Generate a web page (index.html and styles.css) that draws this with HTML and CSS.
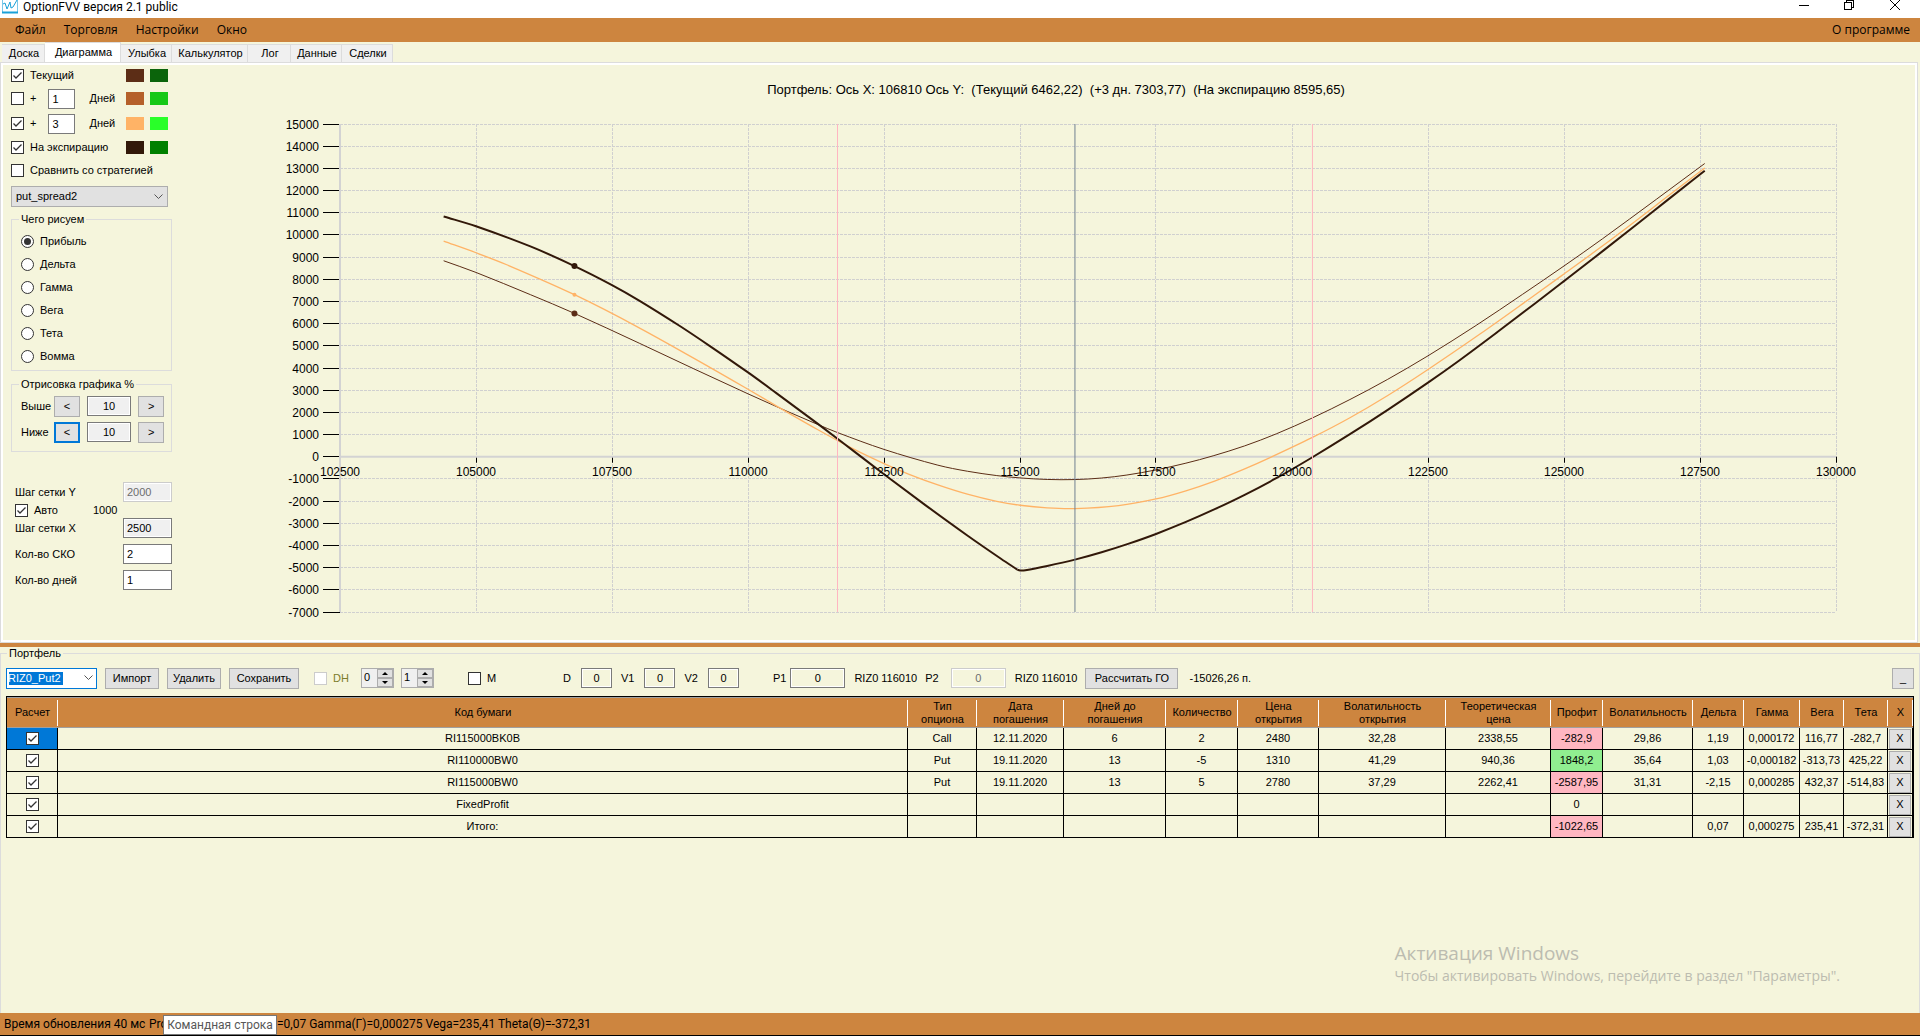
FILE: index.html
```html
<!DOCTYPE html>
<html lang="ru">
<head>
  <meta charset="UTF-8">
  <meta name="viewport" content="width=device-width, initial-scale=1.0">
  <title>OptionFVV версия 2.1 public</title>
  <link rel="stylesheet" href="styles.css">
</head>
<body>
  <header class="titlebar">
    <svg class="app-icon" width="16" height="16" viewBox="0 0 16 16" fill="none" stroke="#1ba1d8">
      <path d="M0.5 0V14.5H15.5V0" stroke="#7cc8e8"/>
      <path d="M0 14.5H16" stroke-width="2"/>
      <path d="M1 6L3 5L5 11L8 4L9 10L11 9L15 2"/>
    </svg>
    <span class="app-name">OptionFVV версия 2.1 public</span>
    <svg class="win-buttons" width="112" height="18" viewBox="0 0 112 18" fill="none" stroke="#000" shape-rendering="crispEdges">
      <path d="M5 5.5H15"/>
      <path d="M50.5 2.5H57.5V9.5H50.5ZM52.5 2V0.5H59.5V7.5H58"/>
      <path d="M96 0L106 10M106 0L96 10" shape-rendering="auto"/>
    </svg>
  </header>

  <nav class="menu">
    <a href="#">Файл</a>
    <a href="#">Торговля</a>
    <a href="#">Настройки</a>
    <a href="#">Окно</a>
    <a href="#" class="about">О программе</a>
  </nav>

  <nav class="tabs">
    <button class="tab tab-s">Доска</button>
    <button class="tab tab-l active">Диаграмма</button>
    <button class="tab tab-m">Улыбка</button>
    <button class="tab tab-l">Калькулятор</button>
    <button class="tab tab-s">Лог</button>
    <button class="tab tab-m">Данные</button>
    <button class="tab tab-m">Сделки</button>
  </nav>

  <main class="panel">
    <aside class="side">
      <div class="lines">
        <div class="line">
          <label><input type="checkbox" checked>Текущий</label>
          <span class="swatches"><i class="sw brown1"></i><i class="sw green1"></i></span>
        </div>
        <div class="line tall">
          <label><input type="checkbox">+</label>
          <input type="text" class="days" id="d1" value="1"><label for="d1">Дней</label>
          <span class="swatches"><i class="sw brown2"></i><i class="sw green2"></i></span>
        </div>
        <div class="line tall">
          <label><input type="checkbox" checked>+</label>
          <input type="text" class="days" id="d2" value="3"><label for="d2">Дней</label>
          <span class="swatches"><i class="sw brown3"></i><i class="sw green3"></i></span>
        </div>
        <div class="line">
          <label><input type="checkbox" checked>На экспирацию</label>
          <span class="swatches"><i class="sw brown4"></i><i class="sw green4"></i></span>
        </div>
        <div class="line tall">
          <label><input type="checkbox">Сравнить со стратегией</label>
        </div>
      </div>

      <select class="strategy"><option>put_spread2</option></select>

      <fieldset class="what">
        <legend>Чего рисуем</legend>
        <label><input type="radio" name="what" checked>Прибыль</label>
        <label><input type="radio" name="what">Дельта</label>
        <label><input type="radio" name="what">Гамма</label>
        <label><input type="radio" name="what">Вега</label>
        <label><input type="radio" name="what">Тета</label>
        <label><input type="radio" name="what">Вомма</label>
      </fieldset>

      <fieldset class="range">
        <legend>Отрисовка графика %</legend>
        <div class="range-row">
          <label for="up">Выше</label>
          <button>&lt;</button><input type="text" id="up" value="10" readonly><button>&gt;</button>
        </div>
        <div class="range-row">
          <label for="down">Ниже</label>
          <button class="focused">&lt;</button><input type="text" id="down" value="10" readonly><button>&gt;</button>
        </div>
      </fieldset>

      <div class="steps">
        <div class="step"><label for="stepY">Шаг сетки Y</label><input type="text" id="stepY" value="2000" disabled></div>
        <div class="auto"><label><input type="checkbox" checked>Авто</label><span>1000</span></div>
        <div class="step"><label for="stepX">Шаг сетки X</label><input type="text" id="stepX" value="2500" readonly></div>
        <div class="step"><label for="sko">Кол-во СКО</label><input type="text" id="sko" value="2"></div>
        <div class="step"><label for="dni">Кол-во дней</label><input type="text" id="dni" value="1"></div>
      </div>
    </aside>
    <div class="chart" id="chart"></div>
  </main>

  <div class="splitter"></div>

  <fieldset class="portfolio">
    <legend>Портфель</legend>
    <div class="toolbar">
      <select class="portfolio-name"><option>RIZ0_Put2</option></select>
      <button>Импорт</button>
      <button>Удалить</button>
      <button class="wide">Сохранить</button>
      <label class="dh"><input type="checkbox" disabled>DH</label>
      <span class="spin"><input type="text" value="0"><span class="arrows"><button class="up"></button><button class="down"></button></span></span>
      <span class="spin"><input type="text" value="1"><span class="arrows"><button class="up"></button><button class="down"></button></span></span>
      <label class="m"><input type="checkbox">M</label>
      <label class="field">D<input type="text" value="0"></label>
      <label class="field">V1<input type="text" value="0"></label>
      <label class="field">V2<input type="text" value="0"></label>
      <label class="field price">P1<input type="text" value="0"></label>
      <span class="code">RIZ0 116010</span>
      <label class="field price second">P2<input type="text" value="0" disabled></label>
      <span class="code">RIZ0 116010</span>
      <button class="calc">Рассчитать ГО</button>
      <span class="margin">-15026,26 п.</span>
      <button class="collapse">_</button>
    </div>

    <div class="grid">
      <table>
        <colgroup>
          <col class="c-check"><col><col class="c-type"><col class="c-date"><col class="c-days"><col class="c-qty"><col class="c-open"><col class="c-vopen"><col class="c-theor"><col class="c-profit"><col class="c-vol"><col class="c-delta"><col class="c-gamma"><col class="c-vega"><col class="c-vega"><col class="c-x">
        </colgroup>
        <thead>
          <tr>
            <th>Расчет</th><th>Код бумаги</th><th>Тип<br>опциона</th><th>Дата<br>погашения</th><th>Дней до<br>погашения</th><th>Количество</th><th>Цена<br>открытия</th><th>Волатильность<br>открытия</th><th>Теоретическая<br>цена</th><th>Профит</th><th>Волатильность</th><th>Дельта</th><th>Гамма</th><th>Вега</th><th>Тета</th><th>X</th>
          </tr>
        </thead>
        <tbody>
          <tr>
            <td class="current"><input type="checkbox" checked></td><td>RI115000BK0B</td><td>Call</td><td>12.11.2020</td><td>6</td><td>2</td><td>2480</td><td>32,28</td><td>2338,55</td><td class="loss">-282,9</td><td>29,86</td><td>1,19</td><td>0,000172</td><td>116,77</td><td>-282,7</td><td><button>X</button></td>
          </tr>
          <tr>
            <td><input type="checkbox" checked></td><td>RI110000BW0</td><td>Put</td><td>19.11.2020</td><td>13</td><td>-5</td><td>1310</td><td>41,29</td><td>940,36</td><td class="gain">1848,2</td><td>35,64</td><td>1,03</td><td>-0,000182</td><td>-313,73</td><td>425,22</td><td><button>X</button></td>
          </tr>
          <tr>
            <td><input type="checkbox" checked></td><td>RI115000BW0</td><td>Put</td><td>19.11.2020</td><td>13</td><td>5</td><td>2780</td><td>37,29</td><td>2262,41</td><td class="loss">-2587,95</td><td>31,31</td><td>-2,15</td><td>0,000285</td><td>432,37</td><td>-514,83</td><td><button>X</button></td>
          </tr>
          <tr>
            <td><input type="checkbox" checked></td><td>FixedProfit</td><td></td><td></td><td></td><td></td><td></td><td></td><td></td><td>0</td><td></td><td></td><td></td><td></td><td></td><td><button>X</button></td>
          </tr>
          <tr>
            <td><input type="checkbox" checked></td><td>Итого:</td><td></td><td></td><td></td><td></td><td></td><td></td><td></td><td class="loss">-1022,65</td><td></td><td>0,07</td><td>0,000275</td><td>235,41</td><td>-372,31</td><td><button>X</button></td>
          </tr>
        </tbody>
      </table>
    </div>
  </fieldset>

  <footer class="status">
    <span class="update">Время обновления 40 мс</span>
    <span class="cut">Pro</span>
    <div class="tooltip">Командная строка</div>
    <span>=0,07 Gamma(Г)=0,000275 Vega=235,41 Theta(Θ)=-372,31</span>
  </footer>

  <div class="watermark">
    <p class="big">Активация Windows</p>
    <p>Чтобы активировать Windows, перейдите в раздел "Параметры".</p>
  </div>

  <script src="chart.js"></script>
</body>
</html>
```
FILE: styles.css
```css
:root {
  --bg: #f5f5dc;
  --bar: #cd853f;
  --line: #dcdcdc;
  --control: #e1e1e1;
  --blue: #0078d7;
}
* { box-sizing: border-box; }
body {
  margin: 0;
  min-height: 100vh;
  display: flex;
  flex-direction: column;
  position: relative;
  background: var(--bg);
  color: #000;
  font: 11px/13px "Liberation Sans", Arial, sans-serif;
}
input, select, button { font: inherit; color: inherit; margin: 0; }
input[type="text"] {
  height: 20px;
  padding: 0 3px;
  border: 1px solid #7a7a7a;
  background: #fff;
  min-width: 0;
}
input[readonly], input[type="text"]:disabled { background: #f0f0f0; box-shadow: inset 0 0 0 1px #fff; }
input:disabled { border-color: #ccc !important; color: #6d6d6d; }
button {
  border: 1px solid #adadad;
  background: var(--control);
  padding: 0;
}
input[type="checkbox"], input[type="radio"] {
  appearance: none;
  flex: none;
  width: 13px;
  height: 13px;
  border: 1px solid #333;
  background: #fff;
  display: inline-grid;
  place-content: center;
}
input[type="checkbox"]:checked {
  background: #fff url('data:image/svg+xml,<svg xmlns="http://www.w3.org/2000/svg" width="11" height="11" fill="none" stroke="%23333" stroke-width="1.3"><path d="M1.5 5.5L4 8L9.5 2.5"/></svg>') no-repeat center;
}
input[type="radio"] { border-radius: 50%; }
input[type="radio"]:checked::before {
  content: "";
  width: 7px;
  height: 7px;
  border-radius: 50%;
  background: #333;
}
select {
  appearance: none;
  border: 1px solid #adadad;
  border-radius: 0;
  padding: 0 4px;
  background: var(--control) url('data:image/svg+xml,<svg xmlns="http://www.w3.org/2000/svg" width="9" height="6" fill="none" stroke="%23555"><path d="M0.5 0.5L4.5 4.5L8.5 0.5"/></svg>') no-repeat right 4px center;
}
fieldset {
  margin: 0;
  border: 1px solid var(--line);
  min-width: 0;
}
legend { padding: 0 2px; }

/* window top */
.titlebar {
  display: flex;
  height: 18px;
  padding-left: 2px;
  background: #fff;
  font: 12px/14px Roboto, sans-serif;
}
.app-icon { margin-top: -2px; }
.app-name { margin-left: 5px; }
.win-buttons { margin-left: auto; margin-right: 14px; }
.menu {
  display: flex;
  gap: 18px;
  height: 24px;
  padding: 0 10px 0 15px;
  background: var(--bar);
  font: 12px/24px "Open Sans", sans-serif;
}
.menu a { color: #000; text-decoration: none; }
.menu .about { margin-left: auto; }
.tabs {
  display: flex;
  align-items: flex-end;
  height: 20px;
  padding-left: 2px;
}
.tab {
  height: 18px;
  padding-left: 2px;
  border: 1px solid var(--line);
  border-width: 1px 1px 0 0;
  background: #f0f0f0;
}
.tab-s { width: 43px; }
.tab-m { width: 51px; }
.tab-l { width: 76px; }
.tab.active { height: 20px; background: #fff; }

/* diagram page */
.panel {
  display: flex;
  margin-right: 2px;
  border: 1px solid var(--line);
  box-shadow: inset 0 0 0 2px #fff;
  padding: 1px 3px 3px;
}
.side {
  flex: none;
  width: 168px;
  padding: 0 0 46px 7px;
}
.side label { display: flex; align-items: center; gap: 6px; }
.line {
  display: flex;
  align-items: center;
  height: 22px;
}
.line.tall { height: 25px; }
.days { width: 27px; margin: 0 14px 0 12px; }
.swatches {
  display: flex;
  gap: 6px;
  margin-left: auto;
  padding-right: 4px;
}
.sw { width: 18px; height: 13px; }
.brown1 { background: #5c2d16; }
.brown2 { background: #b5602a; }
.brown3 { background: #ffb366; }
.brown4 { background: #321809; }
.green1 { background: #0b640b; }
.green2 { background: #17c817; }
.green3 { background: #29ff29; }
.green4 { background: #008000; }
.strategy { display: block; width: 157px; height: 21px; margin-top: 3px; }
.what { margin-top: 6px; padding: 4px 9px; height: 158px; }
.what legend, .range legend { margin-left: -2px; }
.what label { height: 23px; }
.range { margin-top: 7px; padding: 2px 7px 6px 9px; }
.range-row { display: flex; align-items: center; gap: 7px; height: 26px; }
.range-row label { width: 26px; }
.range-row button { width: 26px; height: 21px; }
.range-row input { width: 45px; text-align: center; }
.range-row .focused { border: 2px solid var(--blue); }
.steps { padding: 27px 0 0 4px; }
.step { display: flex; align-items: center; justify-content: space-between; height: 26px; }
.step input { width: 49px; }
.auto { display: flex; gap: 35px; height: 10px; align-items: center; }
.chart { flex: 1; min-width: 0; }
.chart svg { display: block; }
.chart text { font: 12px "Liberation Sans", Arial, sans-serif; white-space: pre; }
.chart .caption { font-size: 13px; }

.splitter { height: 4px; background: var(--bar); }

/* portfolio */
.portfolio {
  flex: 1;
  display: flex;
  flex-direction: column;
  border-width: 1px 1px 0;
  padding: 1px 5px 0;
}
.portfolio legend { margin-left: 1px; }
.toolbar { display: flex; align-items: center; height: 34px; }
.toolbar button { height: 21px; width: 54px; margin-left: 8px; }
.toolbar .wide { width: 70px; }
.portfolio-name {
  width: 91px;
  height: 21px;
  padding: 0 1px;
  border-color: var(--blue);
  color: #fff;
  background:
    url('data:image/svg+xml,<svg xmlns="http://www.w3.org/2000/svg" width="9" height="6" fill="none" stroke="%23555"><path d="M0.5 0.5L4.5 4.5L8.5 0.5"/></svg>') no-repeat right 3px center,
    linear-gradient(var(--blue), var(--blue)) no-repeat 2px center / 54px 13px,
    #fff;
}
.toolbar label { display: flex; align-items: center; gap: 6px; }
.dh { margin-left: 15px; color: #7c7c2a; }
.spin {
  display: flex;
  width: 33px;
  height: 20px;
  margin-left: 7px;
  border: 1px solid #adadad;
  background: #f0f0f0;
}
.dh + .spin { margin-left: 12px; }
.spin input[type="text"] { width: 15px; height: 16px; border: 0; background: none; padding: 0 2px; }
.arrows { flex: 1; display: flex; flex-direction: column; }
.toolbar .arrows button {
  flex: 1;
  width: 100%;
  height: 9px;
  margin: 0;
  display: grid;
  place-content: center;
}
.arrows button::before { content: ""; border: 3px solid transparent; }
.arrows .up::before { border-top: 0; border-bottom-color: #000; }
.arrows .down::before { border-bottom: 0; border-top-color: #000; }
.m { margin: 0 58px 0 34px; }
.toolbar .field { gap: 10px; margin-left: 9px; }
.field input[type="text"] {
  width: 31px;
  text-align: center;
  background: var(--bg);
  box-shadow: inset 0 0 0 1px #fff;
}
.toolbar .price { gap: 4px; margin-left: 34px; }
.price input[type="text"] { width: 55px; }
.toolbar .second { gap: 12px; margin-left: 8px; }
.code { margin-left: 9px; white-space: nowrap; }
.toolbar .calc { width: 93px; }
.margin { margin-left: 11px; white-space: nowrap; }
.toolbar .collapse { width: 22px; margin-left: auto; }
.grid {
  flex: 1;
  margin-top: 1px;
  border: 1px solid #000;
  border-bottom: 0;
}
table {
  width: 100%;
  table-layout: fixed;
  border-collapse: separate;
  border-spacing: 0;
  text-align: center;
}
th {
  height: 31px;
  padding: 0;
  border-top: 1px solid #a0a0a0;
  border-bottom: 1px solid #a0a0a0;
  background: linear-gradient(#fff, #fff) no-repeat right center / 1px 26px, var(--bar);
  font-weight: normal;
}
td {
  height: 22px;
  padding: 0;
  border: solid #000;
  border-width: 0 1px 1px 0;
  white-space: nowrap;
}
td input { vertical-align: middle; }
td button { display: block; width: 22px; height: 20px; margin: auto; }
.current { background: var(--blue); }
.loss { background: #ffb6c1; }
.gain { background: #90ee90; }
.c-check { width: 51px; }
.c-type { width: 69px; }
.c-date { width: 87px; }
.c-days { width: 102px; }
.c-qty { width: 72px; }
.c-open { width: 81px; }
.c-vopen { width: 127px; }
.c-theor { width: 105px; }
.c-profit { width: 52px; }
.c-vol { width: 90px; }
.c-delta { width: 51px; }
.c-gamma { width: 56px; }
.c-vega { width: 44px; }
.c-x { width: 25px; }

/* bottom */
.status {
  display: flex;
  height: 23px;
  padding-left: 4px;
  border-bottom: 1px solid #000;
  background: var(--bar);
  font: 12px/23px Roboto, sans-serif;
  white-space: nowrap;
}
.update { width: 145px; }
.cut { width: 14px; overflow: hidden; }
.tooltip {
  width: 114px;
  height: 20px;
  margin-top: 2px;
  border: 1px solid #767676;
  background: #fff;
  color: #575757;
  line-height: 18px;
  text-align: center;
}
.watermark {
  position: absolute;
  right: 80px;
  bottom: 49px;
  color: #bcbcb0;
  font: 14px/22px "Open Sans", sans-serif;
}
.watermark p { margin: 0; }
.watermark .big { font-size: 19px; line-height: 24px; }
```
FILE: chart.js
```js
const box = document.getElementById('chart');

const xMin = 102500, xMax = 130000, xStep = 2500;
const yMin = -7000, yMax = 15000, yStep = 1000;
const pad = { left: 168, right: 78, top: 60, bottom: 27 };

const now = [[104405,8835],[105000,8308],[106005,7301],[106810,6462],[108000,5120],[109005,3962],[110000,2835],[110630,2143],[111285,1451],[111650,1085],[112500,330],[113490,-380],[114032,-654],[114573,-850],[115000,-955],[115500,-1025],[116010,-1030],[116500,-960],[116965,-825],[117500,-594],[118050,-290],[118550,40],[119130,489],[119710,1030],[120376,1750],[121065,2579],[121760,3490],[122500,4550],[123385,5920],[124235,7316],[125000,8600],[125705,9820],[126695,11600],[127587,13219]];
const plus3 = [[104405,9720],[105000,9195],[105565,8654],[106810,7304],[108000,5812],[109315,4008],[110000,3040],[110550,2248],[111285,1215],[111944,340],[112500,-310],[112950,-780],[113490,-1270],[114032,-1687],[114573,-2010],[115000,-2188],[115500,-2308],[116010,-2338],[116812,-2200],[117500,-1902],[118050,-1535],[118590,-1085],[119130,-549],[119596,-40],[120376,870],[121065,1757],[121760,2759],[122500,3932],[123462,5541],[124350,7090],[125000,8240],[125705,9496],[126323,10640],[126810,11560],[127587,13020]];
// the expiration profile breaks at the 115000 strike
const expiryLeft = [[104405,10830],[105000,10390],[106000,9480],[106810,8596],[107500,7740],[108000,7040],[108740,5905],[109320,4955],[110000,3800],[110515,2880],[111285,1480],[111950,240],[112500,-790],[113260,-2180],[114032,-3550],[114650,-4600],[114950,-5090]];
const expiryRight = [[114950,-5090],[115000,-5125],[115100,-5115],[115500,-4925],[116010,-4639],[116500,-4308],[117000,-3917],[117500,-3481],[118050,-2940],[118590,-2355],[119130,-1720],[119710,-970],[120376,-23],[121065,1015],[121760,2113],[122500,3340],[123075,4340],[123770,5610],[124467,6910],[125000,7917],[125705,9256],[126323,10444],[126918,11602],[127587,12890]];

function draw() {
  const w = box.clientWidth, h = box.clientHeight;
  const px = v => pad.left + (v - xMin) / (xMax - xMin) * (w - pad.left - pad.right);
  const py = v => pad.top + (yMax - v) / (yMax - yMin) * (h - pad.top - pad.bottom);
  const line = (x1, y1, x2, y2, color, extra = '') =>
    `<line x1="${x1}" y1="${y1}" x2="${x2}" y2="${y2}" stroke="${color}" ${extra}/>`;
  const snap = v => Math.floor(v) + 0.5;
  const dash = 'stroke-dasharray="3 1"';
  const top = py(yMax), bottom = py(yMin), left = px(xMin), right = px(xMax);
  let out = '';

  // grid, ticks, labels
  for (let y = yMin; y <= yMax; y += yStep) {
    const p = snap(py(y));
    out += line(left, p, right, p, '#d0d0d0', dash);
    out += line(left - 17, p, left, p, '#000');
    out += `<text x="${left - 21}" y="${p + 4}" text-anchor="end">${y}</text>`;
  }
  for (let x = xMin; x <= xMax; x += xStep) {
    const p = snap(px(x));
    out += line(p, top, p, bottom, '#d0d0d0', dash);
    out += line(p, py(0), p, py(0) + 6, '#000');
  }
  out += line(left, top, left, bottom, '#d3d3d3', 'stroke-width="2"');
  out += line(left, py(0), right, py(0), '#d3d3d3', 'stroke-width="2"');

  // curves, smoothed through the points
  const curve = (data, color, width) => {
    const p = data.map(([x, y]) => [px(x), py(y)]);
    let d = `M${p[0]}`;
    for (let i = 0; i < p.length - 1; i++) {
      const a = p[i - 1] || p[i], b = p[i], c = p[i + 1], e = p[i + 2] || c;
      const dx = (c[0] - b[0]) / 3;
      const s1 = (c[1] - a[1]) / (c[0] - a[0]), s2 = (e[1] - b[1]) / (e[0] - b[0]);
      d += `C${b[0] + dx},${b[1] + dx * s1} ${c[0] - dx},${c[1] - dx * s2} ${c}`;
    }
    return `<path d="${d}" fill="none" stroke="${color}" stroke-width="${width}"/>`;
  };
  out += curve(now, '#5c2d16', 1);
  out += curve(plus3, '#ffb366', 1.3);
  out += curve(expiryLeft, '#321809', 2);
  out += curve(expiryRight, '#321809', 2);

  const dot = (y, r, color) => `<circle cx="${px(106810)}" cy="${py(y)}" r="${r}" fill="${color}"/>`;
  out += dot(6462.22, 3, '#5c2d16') + dot(7303.77, 2, '#ffb366') + dot(8595.65, 3, '#321809');

  for (let x = xMin; x <= xMax; x += xStep) {
    out += `<text x="${px(x)}" y="${py(0) + 19}" text-anchor="middle">${x}</text>`;
  }

  // market price and deviation bounds
  out += line(snap(px(111650)), top, snap(px(111650)), bottom, '#ffb6c1');
  out += line(px(120376), top, px(120376), bottom, '#ffb6c1');
  out += line(px(116010), top, px(116010), bottom, '#708090');

  out += `<text class="caption" x="${w / 2 + 13}" y="30" text-anchor="middle">Портфель: Ось X: 106810 Ось Y:  (Текущий 6462,22)  (+3 дн. 7303,77)  (На экспирацию 8595,65)</text>`;
  box.innerHTML = `<svg width="${w}" height="${h}">${out}</svg>`;
}

draw();
window.addEventListener('resize', () => {
  box.innerHTML = '';
  draw();
});
```
